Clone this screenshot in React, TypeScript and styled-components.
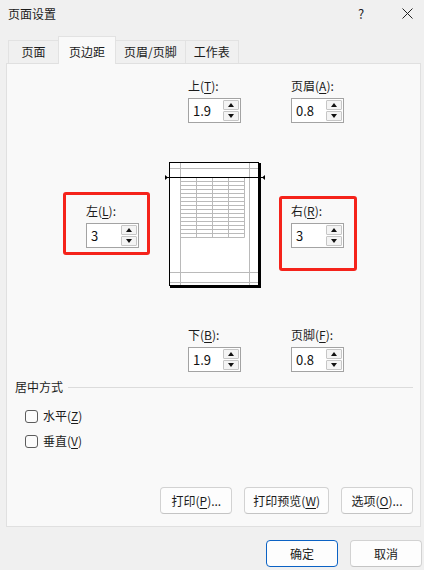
import React from "react";
import styled, { createGlobalStyle, css } from "styled-components";

const GlobalStyle = createGlobalStyle`
  * { box-sizing: border-box; }
  html, body { margin: 0; padding: 0; background: #f0f0f0; }
  body {
    font-family: "Noto Sans CJK SC", "Noto Sans", sans-serif;
    font-size: 12px;
    color: #1b1b1b;
  }
  u { text-decoration-thickness: 1px; text-underline-offset: 2px; }
`;

const Window = styled.div`
  width: 424px;
  height: 570px;
  display: flex;
  flex-direction: column;
  background: #f0f0f0;
  overflow: hidden;
`;

const TitleBar = styled.div`
  height: 26px;
  display: flex;
  align-items: center;
  padding-left: 8px;
`;

const Title = styled.div`
  flex: 1;
  font-size: 12px;
  line-height: 16px;
  padding-top: 1px;
`;

const TitleButton = styled.div<{ $width: number; $gap?: number }>`
  width: ${(p) => p.$width}px;
  margin-right: ${(p) => p.$gap ?? 0}px;
  height: 26px;
  display: flex;
  align-items: center;
  justify-content: center;
  font-size: 13px;
  color: #222;
`;

const TabStrip = styled.div`
  height: 37px;
  display: flex;
  align-items: flex-end;
  padding-left: 8px;
`;

const Tab = styled.div<{ $active?: boolean }>`
  height: 23px;
  min-width: 51px;
  padding: 0 8px;
  display: flex;
  align-items: center;
  justify-content: center;
  line-height: 16px;
  background: #f0f0f0;
  border: 1px solid #e2e2e2;
  border-bottom: none;
  & + & { margin-left: -1px; }
  ${(p) =>
    p.$active &&
    css`
      height: 28px;
      padding: 3px 10px 0;
      margin-bottom: -1px;
      background: #f9f9f9;
      position: relative;
      z-index: 1;
    `}
`;

const Panel = styled.div`
  margin: 0 3px 0 6px;
  height: 464px;
  border: 1px solid #e0e0e0;
  background: #f9f9f9;
  display: flex;
  flex-direction: column;
`;

const FieldRow = styled.div<{ $top: number; $left: number }>`
  display: flex;
  align-items: center;
  margin-top: ${(p) => p.$top}px;
  padding-left: ${(p) => p.$left}px;
  gap: 50px;
`;

const MarginsRow = styled.div`
  display: flex;
  align-items: center;
  margin-top: 39px;
  padding-left: 79px;
  gap: 24px;
`;

const Field = styled.div`
  display: flex;
  flex-direction: column;
  gap: 4px;
  width: 53px;
`;

const FieldLabel = styled.div`
  line-height: 16px;
  white-space: nowrap;
`;

const Spinner = styled.div`
  width: 53px;
  height: 25px;
  display: flex;
  background: #fff;
  border: 1px solid #a3a3a3;
`;

const SpinnerValue = styled.div`
  flex: 1;
  display: flex;
  align-items: center;
  padding-left: 4px;
  font-size: 13px;
  color: #111;
`;

const SpinnerArrows = styled.div`
  width: 17px;
  display: flex;
  flex-direction: column;
  gap: 1px;
  padding: 1px 1px 1px 0;
`;

const ArrowButton = styled.div`
  flex: 1;
  display: flex;
  align-items: center;
  justify-content: center;
  background: #f4f4f4;
  border: 1px solid #c6c6c6;
  border-radius: 1px;
`;

const Highlight = styled.div<{ $t: number; $r: number; $b: number; $l: number }>`
  position: relative;
  &::after {
    content: "";
    position: absolute;
    top: ${(p) => -p.$t}px;
    right: ${(p) => -p.$r}px;
    bottom: ${(p) => -p.$b}px;
    left: ${(p) => -p.$l}px;
    border: 3px solid #f5231b;
    border-radius: 3px;
    pointer-events: none;
  }
`;

const PagePreview = styled.svg`
  display: block;
  flex: none;
`;

const Section = styled.div`
  margin-top: 7px;
  padding: 0 7px 0 8px;
`;

const Legend = styled.div`
  display: flex;
  align-items: center;
  line-height: 16px;
  &::after {
    content: "";
    flex: 1;
    height: 1px;
    margin-left: 5px;
    background: #dcdcdc;
  }
`;

const CheckList = styled.div`
  display: flex;
  flex-direction: column;
  gap: 9px;
  margin-top: 13px;
  padding-left: 10px;
`;

const CheckRow = styled.label`
  display: flex;
  align-items: center;
  gap: 5px;
  line-height: 16px;
`;

const CheckBox = styled.span`
  width: 13px;
  height: 13px;
  border: 1px solid #5c5c5c;
  border-radius: 3px;
  background: #fbfbfb;
`;

const ButtonRow = styled.div<{ $bottom: number; $top?: number }>`
  display: flex;
  justify-content: flex-end;
  gap: 12px;
  margin-top: auto;
  padding: ${(p) => p.$top ?? 0}px 0 ${(p) => p.$bottom}px;
`;

const PanelButtons = styled(ButtonRow)`
  padding-right: 7px;
`;

const Footer = styled(ButtonRow)`
  margin-top: 0;
  padding-right: 2px;
`;

const Button = styled.div<{ $primary?: boolean }>`
  min-width: 72px;
  height: 27px;
  padding: 0 8px;
  display: flex;
  align-items: center;
  justify-content: center;
  white-space: nowrap;
  background: #fdfdfd;
  border: 1px solid #d2d2d2;
  border-bottom-color: #c4c4c4;
  border-radius: 4px;
  color: #1b1b1b;
  ${(p) =>
    p.$primary &&
    css`
      border-color: #0b62c4;
    `}
`;

const Arrow = ({ up }: { up?: boolean }) => (
  <svg width="6" height="4" viewBox="0 0 6 4">
    <polygon points={up ? "0,4 3,0 6,4" : "0,0 6,0 3,4"} fill="#111" />
  </svg>
);

const SpinField = ({ label, hot, value }: { label: string; hot: string; value: string }) => (
  <Field>
    <FieldLabel>
      {label}(<u>{hot}</u>):
    </FieldLabel>
    <Spinner>
      <SpinnerValue>{value}</SpinnerValue>
      <SpinnerArrows>
        <ArrowButton>
          <Arrow up />
        </ArrowButton>
        <ArrowButton>
          <Arrow />
        </ArrowButton>
      </SpinnerArrows>
    </Spinner>
  </Field>
);

// Thumbnail of the page: margins, header/footer guides and the sheet grid.
const Preview = () => {
  const gray = "#bababa";
  const rows = Array.from({ length: 15 }, (_, i) => 19.5 + i * 4);
  const cols = [17.5, 33.5, 49.5, 65.5, 81.5];
  return (
    <PagePreview width="104" height="127" viewBox="0 0 104 127">
      <rect x="7" y="1" width="91" height="125" fill="#000" />
      <rect x="6.5" y="0.5" width="89" height="123" fill="#fff" stroke="#000" />
      <line x1="17.5" y1="1" x2="17.5" y2="123" stroke={gray} />
      <line x1="86.5" y1="1" x2="86.5" y2="123" stroke={gray} />
      <line x1="7" y1="6.5" x2="95" y2="6.5" stroke={gray} />
      <line x1="7" y1="110.5" x2="95" y2="110.5" stroke={gray} />
      <line x1="7" y1="120.5" x2="95" y2="120.5" stroke={gray} />
      {rows.map((y) => (
        <line key={y} x1="17.5" y1={y} x2="81.5" y2={y} stroke={gray} />
      ))}
      {cols.map((x) => (
        <line key={x} x1={x} y1="15" x2={x} y2="75.5" stroke={gray} />
      ))}
      <line x1="3" y1="15.5" x2="101" y2="15.5" stroke="#000" />
      <polygon points="2,13 5,15.5 2,18" fill="#000" />
      <polygon points="102,13 99,15.5 102,18" fill="#000" />
    </PagePreview>
  );
};

export default function App() {
  return (
    <Window>
      <GlobalStyle />
      <TitleBar>
        <Title>页面设置</Title>
        <TitleButton $width={20} $gap={19}>?</TitleButton>
        <TitleButton $width={34}>
          <svg width="11" height="11" viewBox="0 0 11 11">
            <path d="M0.5 0.5 L10.5 10.5 M10.5 0.5 L0.5 10.5" stroke="#222" strokeWidth="1" />
          </svg>
        </TitleButton>
      </TitleBar>

      <TabStrip>
        <Tab>页面</Tab>
        <Tab $active>页边距</Tab>
        <Tab>页眉/页脚</Tab>
        <Tab>工作表</Tab>
      </TabStrip>

      <Panel>
        <FieldRow $top={14} $left={181}>
          <SpinField label="上" hot="T" value="1.9" />
          <SpinField label="页眉" hot="A" value="0.8" />
        </FieldRow>

        <MarginsRow>
          <Highlight $t={11} $r={11} $b={7} $l={23}>
            <SpinField label="左" hot="L" value="3" />
          </Highlight>
          <Preview />
          <Highlight $t={7} $r={13} $b={23} $l={12}>
            <SpinField label="右" hot="R" value="3" />
          </Highlight>
        </MarginsRow>

        <FieldRow $top={38} $left={181}>
          <SpinField label="下" hot="B" value="1.9" />
          <SpinField label="页脚" hot="F" value="0.8" />
        </FieldRow>

        <Section>
          <Legend>居中方式</Legend>
          <CheckList>
            <CheckRow>
              <CheckBox />
              <span>
                水平(<u>Z</u>)
              </span>
            </CheckRow>
            <CheckRow>
              <CheckBox />
              <span>
                垂直(<u>V</u>)
              </span>
            </CheckRow>
          </CheckList>
        </Section>

        <PanelButtons $bottom={12}>
          <Button>
            打印(<u>P</u>)...
          </Button>
          <Button>
            打印预览(<u>W</u>)
          </Button>
          <Button>
            选项(<u>O</u>)...
          </Button>
        </PanelButtons>
      </Panel>

      <Footer $top={13} $bottom={3}>
        <Button $primary>确定</Button>
        <Button>取消</Button>
      </Footer>
    </Window>
  );
}
